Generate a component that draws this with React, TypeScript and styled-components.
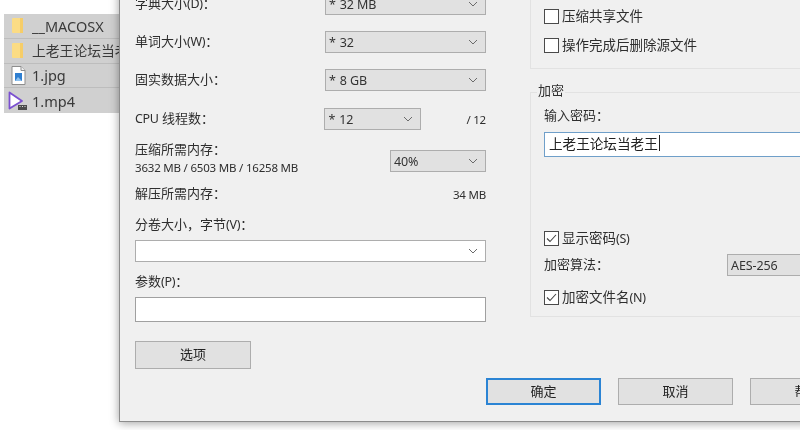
import React from 'react';
import styled, { createGlobalStyle } from 'styled-components';

const GlobalStyle = createGlobalStyle`
  html, body {
    margin: 0;
    padding: 0;
    background: #fff;
  }
  body {
    font-family: "Noto Sans", "Noto Sans CJK SC", sans-serif;
    color: #2e2e2e;
  }
`;

const Page = styled.div`
  display: flex;
  align-items: flex-start;
  width: 800px;
  height: 430px;
  overflow: hidden;
  background: #fff;
  filter: blur(0.35px);
`;

const FileList = styled.ul`
  flex: 0 0 115px;
  min-width: 0;
  margin: 14px 0 0 4px;
  padding: 0;
  list-style: none;
`;

const FileRow = styled.li`
  display: flex;
  align-items: center;
  height: 24.75px;
  box-sizing: border-box;
  background: #d0d0d0;
  border-bottom: 1px solid #bdbdbd;
  white-space: nowrap;
  overflow: hidden;
  color: #3a3a3a;

  &:last-child {
    border-bottom: none;
  }
`;

const FileIconSlot = styled.span`
  display: flex;
  flex: 0 0 auto;
  justify-content: center;
  width: 28px;
  box-sizing: border-box;
`;

const FileName = styled.span<{ $size: number }>`
  font-size: ${({ $size }) => $size}px;
  line-height: 18px;
`;

const Dialog = styled.div`
  position: relative;
  flex: 0 0 760px;
  display: flex;
  flex-direction: column;
  box-sizing: border-box;
  height: 442px;
  margin-top: -20px;
  padding: 0 0 16px 15px;
  background: #f0f0f0;
  border-left: 1px solid #8c8c8c;
  border-bottom: 1px solid #8c8c8c;
  box-shadow: 0 1px 9px rgba(0, 0, 0, 0.38);
  overflow: hidden;
`;

const Body = styled.div`
  display: flex;
  gap: 44px;
`;

const LeftColumn = styled.div`
  flex: 0 0 351px;
  display: flex;
  flex-direction: column;
  padding-top: 13px;
`;

const RightColumn = styled.div`
  flex: 0 0 340px;
  display: flex;
  flex-direction: column;
`;

const FieldRow = styled.div<{ $gap?: number }>`
  display: flex;
  align-items: center;
  justify-content: space-between;
  height: 22px;
  margin-bottom: ${({ $gap }) => $gap ?? 16}px;
`;

const Label = styled.span`
  display: block;
  height: 18px;
  font-size: 13px;
  line-height: 17px;
  white-space: nowrap;
`;

const BlockLabel = styled(Label)<{ $gap?: number; $bottom?: number }>`
  margin-top: ${({ $gap }) => $gap ?? 0}px;
  margin-bottom: ${({ $bottom }) => $bottom ?? 6}px;
`;

const Latin = styled.span`
  font-size: 12.5px;
  letter-spacing: -0.3px;
`;

const Combo = styled.div<{ $width: number; $white?: boolean }>`
  display: flex;
  flex: 0 0 auto;
  align-items: center;
  justify-content: space-between;
  box-sizing: border-box;
  width: ${({ $width }) => $width}px;
  height: 22px;
  padding: 0 7px 0 3px;
  background: ${({ $white }) => ($white ? '#fff' : '#e1e1e1')};
  border: 1px solid #adadad;
  font-size: 12.5px;
  letter-spacing: -0.1px;
  color: #333;
`;

const Chevron = () => (
  <svg width="10" height="6" viewBox="0 0 10 6" fill="none">
    <path d="M1 1l4 4 4-4" stroke="#6b6b6b" strokeWidth="1" />
  </svg>
);

const Star = styled.span`
  margin-right: 4px;
`;

const ValueText = styled.span<{ $left?: number }>`
  margin-left: ${({ $left }) => $left ?? 0}px;
  font-size: 11.5px;
  letter-spacing: -0.2px;
`;

const CpuCombo = styled(Combo)`
  margin-left: auto;
`;

const MemoryRow = styled.div`
  display: flex;
  justify-content: space-between;
  margin-top: -5px;
  height: 36px;
`;

const MemoryText = styled.div`
  height: 17px;
  font-size: 13px;
  line-height: 17px;
`;

const MemoryNumbers = styled.div`
  font-size: 11.5px;
  line-height: 19px;
  letter-spacing: -0.2px;
  white-space: nowrap;
`;

const MemoryCombo = styled(Combo)`
  margin-top: 9px;
`;

const PlainRow = styled.div`
  display: flex;
  justify-content: space-between;
  align-items: center;
  height: 18px;
  margin-top: 8px;
`;

const ParamInput = styled.div`
  box-sizing: border-box;
  height: 25px;
  background: #fff;
  border: 1px solid #a0a0a0;
`;

const Button = styled.div<{ $primary?: boolean; $width?: number }>`
  display: flex;
  flex: 0 0 auto;
  align-items: center;
  justify-content: center;
  box-sizing: border-box;
  width: ${({ $width }) => $width ?? 115}px;
  height: 27px;
  padding-bottom: 2px;
  background: #e1e1e1;
  border: ${({ $primary }) => ($primary ? '2px solid #2b84d4' : '1px solid #adadad')};
  font-size: 13px;
  line-height: 18px;
  color: #222;
`;

const OptionsButton = styled(Button)`
  height: 28px;
  margin-top: 19px;
`;

const Footer = styled.div`
  display: flex;
  gap: 17px;
  margin: 9px 0 0 351px;
`;

const CompressGroup = styled.div`
  display: flex;
  flex-direction: column;
  justify-content: flex-end;
  gap: 11px;
  box-sizing: border-box;
  height: 89px;
  padding: 0 0 14px 13px;
  border-left: 1px solid #e2e2e2;
  border-bottom: 1px solid #e2e2e2;
`;

const EncryptGroup = styled.div`
  position: relative;
  display: flex;
  flex-direction: column;
  box-sizing: border-box;
  height: 225px;
  margin-top: 23px;
  padding: 14px 0 0 13px;
  border: 1px solid #e2e2e2;
  border-right: none;
`;

const Legend = styled.span`
  position: absolute;
  top: -12px;
  left: 6px;
  padding: 0 1px;
  background: #f0f0f0;
  font-size: 13px;
  line-height: 18px;
`;

const CheckRow = styled.div<{ $top?: number }>`
  display: flex;
  align-items: center;
  gap: 3px;
  height: 18px;
  margin-top: ${({ $top }) => $top ?? 0}px;
  font-size: 13.5px;
  line-height: 18px;
  white-space: nowrap;
`;

const CheckBox = styled.span`
  display: flex;
  flex: 0 0 auto;
  align-items: center;
  justify-content: center;
  box-sizing: border-box;
  width: 15px;
  height: 15px;
  background: #fff;
  border: 1px solid #4a4a4a;
`;

const Check = ({ on, children }: { on?: boolean; children: React.ReactNode }) => (
  <>
    <CheckBox>
      {on && (
        <svg width="11" height="9" viewBox="0 0 11 9" fill="none">
          <path d="M1 4.5l3 3 6-6.5" stroke="#444" strokeWidth="1.1" />
        </svg>
      )}
    </CheckBox>
    <span>{children}</span>
  </>
);

const PasswordInput = styled.div`
  display: flex;
  align-items: center;
  box-sizing: border-box;
  width: 330px;
  height: 25px;
  margin-top: 7px;
  padding: 0 0 4px 4px;
  background: #fff;
  border: 1px solid #6f9fc9;
  font-size: 13.6px;
  color: #222;
  white-space: nowrap;
`;

const Caret = styled.span`
  display: inline-block;
  width: 1px;
  height: 16px;
  margin-left: 1px;
  background: #222;
`;

const AlgorithmRow = styled.div`
  display: flex;
  align-items: center;
  height: 22px;
  margin-top: 7px;
`;

const AlgorithmLabel = styled(Label)`
  flex: 0 0 183px;
`;

const FolderIcon = () => (
  <svg width="12" height="16" viewBox="0 0 12 16">
    <rect x="0" y="0" width="11" height="15" rx="1" fill="#fbdc85" />
    <rect x="8" y="0" width="3" height="15" fill="#f6cd68" />
  </svg>
);

const JpgIcon = () => (
  <svg width="15" height="19" viewBox="0 0 15 19">
    <path d="M1 .5h9l4 4v14H1z" fill="#fff" stroke="#8d8d8d" />
    <path d="M10 .5v4h4" fill="#eee" stroke="#8d8d8d" />
    <rect x="4" y="7" width="7" height="8" fill="#2f7fd1" />
    <path d="M4 15l3-4 4 4z" fill="#8fc2ef" />
  </svg>
);

const VideoIcon = () => (
  <svg width="20" height="20" viewBox="0 0 20 20">
    <path d="M1.5 1.5L14 10 1.5 17.5z" fill="#fff" stroke="#7a4fd0" strokeWidth="1.8" strokeLinejoin="round" />
    <rect x="10" y="14" width="9" height="5" fill="#4b4b4b" />
    <path d="M11.5 15.5h1M14 15.5h1M16.5 15.5h1" stroke="#ddd" strokeWidth="1" />
  </svg>
);

const files = [
  { name: '__MACOSX', icon: <FolderIcon />, size: 14.5 },
  { name: '上老王论坛当老王', icon: <FolderIcon />, size: 13.8 },
  { name: '1.jpg', icon: <JpgIcon />, size: 14.5 },
  { name: '1.mp4', icon: <VideoIcon />, size: 14.5 },
];

const sizeRows = [
  { label: '字典大小', key: '(D)', value: '32 MB' },
  { label: '单词大小', key: '(W)', value: '32' },
  { label: '固实数据大小', key: '', value: '8 GB', gap: 17 },
];

const App: React.FC = () => {
  return (
    <Page>
      <GlobalStyle />
      <FileList>
        {files.map(file => (
          <FileRow key={file.name}>
            <FileIconSlot>{file.icon}</FileIconSlot>
            <FileName $size={file.size}>{file.name}</FileName>
          </FileRow>
        ))}
      </FileList>

      <Dialog>
        <Body>
          <LeftColumn>
            {sizeRows.map(row => (
              <FieldRow key={row.label} $gap={row.gap}>
                <Label>{row.label}<Latin>{row.key}</Latin>：</Label>
                <Combo $width={161}>
                  <span><Star>*</Star>{row.value}</span>
                  <Chevron />
                </Combo>
              </FieldRow>
            ))}
            <FieldRow>
              <Label><Latin>CPU</Latin> 线程数：</Label>
              <CpuCombo $width={97}>
                <span><Star>*</Star>12</span>
                <Chevron />
              </CpuCombo>
              <ValueText $left={45}>/ 12</ValueText>
            </FieldRow>
            <MemoryRow>
              <div>
                <MemoryText>压缩所需内存：</MemoryText>
                <MemoryNumbers>3632 MB / 6503 MB / 16258 MB</MemoryNumbers>
              </div>
              <MemoryCombo $width={96}>
                <span>40%</span>
                <Chevron />
              </MemoryCombo>
            </MemoryRow>
            <PlainRow>
              <Label>解压所需内存：</Label>
              <ValueText>34 MB</ValueText>
            </PlainRow>
            <BlockLabel $gap={13}>分卷大小，字节<Latin>(V)</Latin>：</BlockLabel>
            <Combo $width={351} $white>
              <span />
              <Chevron />
            </Combo>
            <BlockLabel $gap={11}>参数<Latin>(P)</Latin>：</BlockLabel>
            <ParamInput />
            <OptionsButton $width={116}>选项</OptionsButton>
          </LeftColumn>

          <RightColumn>
            <CompressGroup>
              <CheckRow><Check>压缩共享文件</Check></CheckRow>
              <CheckRow><Check>操作完成后删除源文件</Check></CheckRow>
            </CompressGroup>
            <EncryptGroup>
              <Legend>加密</Legend>
              <Label>输入密码：</Label>
              <PasswordInput>上老王论坛当老王<Caret /></PasswordInput>
              <CheckRow $top={72}>
                <Check on>显示密码<Latin>(S)</Latin></Check>
              </CheckRow>
              <AlgorithmRow>
                <AlgorithmLabel>加密算法：</AlgorithmLabel>
                <Combo $width={120}>
                  <span>AES-256</span>
                  <Chevron />
                </Combo>
              </AlgorithmRow>
              <CheckRow $top={12}>
                <Check on>加密文件名<Latin>(N)</Latin></Check>
              </CheckRow>
            </EncryptGroup>
          </RightColumn>
        </Body>
        <Footer>
          <Button $primary>确定</Button>
          <Button>取消</Button>
          <Button>帮助</Button>
        </Footer>
      </Dialog>
    </Page>
  );
};

export default App;
